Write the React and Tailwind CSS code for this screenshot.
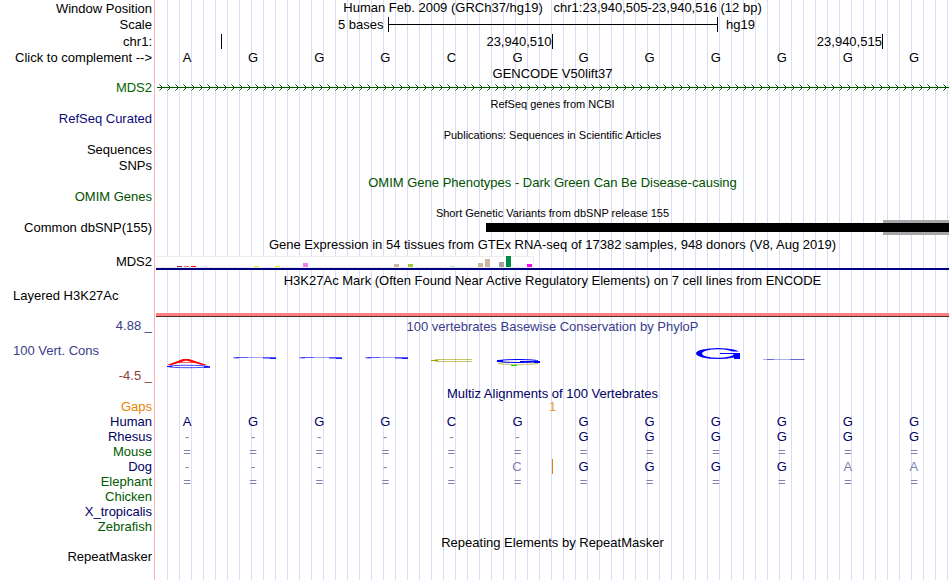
const HUMAN = "AGGGCGGGGGGG";

const GRID = "bg-[repeating-linear-gradient(to_right,transparent_0_11px,#dcdcf8_11px_12px)]";

const ALIGNMENTS = [
  { name: "Human", color: "text-[#000064]", bases: HUMAN },
  { name: "Rhesus", color: "text-[#000064]", bases: "------GGGGGG" },
  { name: "Mouse", color: "text-[#005a00]", bases: "============" },
  { name: "Dog", color: "text-[#000064]", bases: "-----CGGGGAA", insertAt: 5 },
  { name: "Elephant", color: "text-[#005a00]", bases: "============" },
  { name: "Chicken", color: "text-[#005a00]", bases: "" },
  { name: "X_tropicalis", color: "text-[#000064]", bases: "" },
  { name: "Zebrafish", color: "text-[#005a00]", bases: "" },
];

// tissue index -> bar height and colour
const TISSUES = {
  3: { h: 1, c: "#8b1c62" },
  4: { h: 1, c: "#ee6a50" },
  5: { h: 1, c: "#ff0000" },
  14: { h: 1, c: "#eeee00" },
  17: { h: 1, c: "#eeee00" },
  21: { h: 4, c: "#ee82ee" },
  34: { h: 3, c: "#cdb79e" },
  36: { h: 3, c: "#9acd32" },
  42: { h: 1, c: "#b4eeb4" },
  46: { h: 4, c: "#cdb79e" },
  47: { h: 8, c: "#cdb79e" },
  49: { h: 5, c: "#a6a6a6" },
  50: { h: 11, c: "#008b45" },
  53: { h: 3, c: "#ff00ff" },
};

function Row({ label, color = "text-black", height = "h-[15px]", children }) {
  return (
    <div className={`flex ${height}`}>
      <div
        className={`w-[155px] shrink-0 flex items-center justify-end border-r border-[#ffb4b4] pr-0.5 ${color}`}
      >
        {label}
      </div>
      <div className={`ml-px mr-px flex-1 min-w-0 ${GRID}`}>{children}</div>
    </div>
  );
}

function Title({ text, color = "text-black", height = "h-[16px]", small }) {
  return (
    <Row height={height}>
      <h2
        className={`h-full flex items-center justify-center pt-0.5 ${color} ${small ? "text-[11px]" : ""}`}
      >
        {text}
      </h2>
    </Row>
  );
}

function Bases({ seq, color, insertAt }) {
  return (
    <div className={`grid grid-cols-12 h-full ${color}`}>
      {seq.split("").map((b, i) => {
        const faded = b === "-" || b === "=" || (color !== "text-black" && b !== HUMAN[i]);
        return (
          <span
            key={i}
            className={`pr-1 text-center ${faded ? "text-[#8080b2]" : ""} ${
              i === insertAt ? "border-r border-[#e68200]" : ""
            }`}
          >
            {b}
          </span>
        );
      })}
    </div>
  );
}

function GeneLine() {
  return (
    <svg className="block w-full h-[15px]" aria-label="MDS2 intron">
      <defs>
        <pattern id="strand" x="1" width="8" height="15" patternUnits="userSpaceOnUse">
          <polyline points="2.5,4.5 5.5,7.5 2.5,10.5" fill="none" stroke="#005a00" strokeWidth="1" />
        </pattern>
      </defs>
      <rect x="1" width="100%" height="15" fill="url(#strand)" />
      <rect x="1" y="7" width="100%" height="1" fill="#005a00" />
    </svg>
  );
}

function GtexBars() {
  return (
    <div className="h-full flex flex-col justify-end">
      <div className="w-[378px] h-[12px] flex items-end gap-[2px] bg-white border-t border-r border-b border-[#ececec]">
        {Array.from({ length: 54 }, (_, i) => {
          const t = TISSUES[i];
          return (
            <div
              key={i}
              className="w-[5px] shrink-0"
              style={{ height: t ? t.h : 0, backgroundColor: t?.c }}
            />
          );
        })}
      </div>
      <div className="h-[2px] bg-[#000080]" />
    </div>
  );
}

/* conservation logo, one drawing per base */
function FlatG() {
  return (
    <g>
      <rect x="0" y="12" width="43" height="1" fill="#0000ff" opacity="0.35" />
      <rect x="3" y="12" width="12" height="1" fill="#0000ff" opacity="0.45" />
      <rect x="1" y="12" width="5" height="2" fill="#0000ff" opacity="0.3" />
      <rect x="30" y="12" width="13" height="2" fill="#0000ff" opacity="0.45" />
      <rect x="37" y="13" width="6" height="1" fill="#0000ff" opacity="0.8" />
    </g>
  );
}

const LOGOS = {
  0: (
    <g>
      <ellipse cx="21" cy="21.5" rx="20" ry="1.2" fill="none" stroke="#0000ff" strokeWidth="0.7" />
      <rect x="0" y="21" width="5" height="1" fill="#0000ff" />
      <rect x="37" y="21" width="6" height="2" fill="#0000ff" opacity="0.8" />
      <polygon points="0,20 16,14 22,14 40,20 35,20 19,15.5 5,20" fill="#ff0000" />
      <rect x="11" y="17" width="16" height="1" fill="#ff0000" opacity="0.6" />
    </g>
  ),
  1: <FlatG />,
  2: <FlatG />,
  3: <FlatG />,
  4: (
    <g>
      <rect x="4" y="14" width="37" height="1" fill="#a0a000" opacity="0.6" />
      <rect x="4" y="16" width="37" height="1" fill="#a0a000" opacity="0.6" />
      <rect x="0" y="15" width="7" height="1" fill="#a0a000" />
    </g>
  ),
  5: (
    <g>
      <ellipse cx="21" cy="18.5" rx="20" ry="1" fill="none" stroke="#a0a000" strokeWidth="0.8" opacity="0.7" />
      <rect x="14" y="20" width="6" height="1" fill="#00e600" />
      <ellipse cx="21" cy="16" rx="20" ry="1.5" fill="none" stroke="#0000ff" strokeWidth="1" />
      <rect x="0" y="15" width="6" height="2" fill="#0000ff" />
      <rect x="23" y="16" width="20" height="1" fill="#0000ff" />
      <rect x="37" y="16" width="6" height="2" fill="#0000ff" />
    </g>
  ),
  8: (
    <g>
      <mask id="ring">
        <rect width="44" height="25" fill="#ffffff" />
        <ellipse cx="22" cy="8.5" rx="16" ry="4.3" fill="#000000" />
        <rect x="34" y="6.5" width="10" height="1.5" fill="#000000" />
      </mask>
      <ellipse cx="22" cy="8.5" rx="22" ry="5.5" fill="#0000ff" mask="url(#ring)" />
      <rect x="24" y="8" width="20" height="1" fill="#0000ff" />
      <rect x="38" y="8" width="6" height="6" fill="#0000ff" />
    </g>
  ),
  9: (
    <g fill="#3c3cc8">
      <rect x="1" y="14" width="42" height="1" opacity="0.4" />
      <rect x="5" y="14" width="7" height="1" opacity="0.6" />
      <rect x="28" y="14" width="14" height="1" opacity="0.6" />
    </g>
  ),
};

export default function App() {
  return (
    <main className="min-h-screen flex flex-col bg-white overflow-hidden whitespace-pre text-[13px] leading-[15px] font-['Liberation_Sans',Arial,sans-serif]">
      <Row label="Window Position" height="h-[16px]">
        <h1 className="text-center">
          {"Human Feb. 2009 (GRCh37/hg19)   chr1:23,940,505-23,940,516 (12 bp)"}
        </h1>
      </Row>
      <Row label="Scale" height="h-[17px]">
        <div className="flex h-full items-center">
          <span className="w-[29.2%] pr-1 text-right">5 bases</span>
          <div className="w-5/12 h-[15px] flex items-center border-x border-black">
            <div className="w-full h-px bg-black" />
          </div>
          <span className="pl-2">hg19</span>
        </div>
      </Row>
      <Row label="chr1:" height="h-[17px]">
        <div className="grid grid-cols-12 pt-px text-right">
          <span className="h-[15px] border-r border-black" />
          <span className="col-start-6 h-[15px] pr-0.5 border-r border-black">23,940,510</span>
          <span className="col-start-11 h-[15px] pr-0.5 border-r border-black">23,940,515</span>
        </div>
      </Row>
      <Row label={<button type="button">{"Click to complement -->"}</button>}>
        <Bases seq={HUMAN} color="text-black" />
      </Row>

      <Title text="GENCODE V50lift37" height="h-[15px]" />
      <Row label="MDS2" color="text-[#006400]">
        <GeneLine />
      </Row>
      <Title text="RefSeq genes from NCBI" small />
      <Row label="RefSeq Curated" color="text-[#0c0c78]" />
      <Title text="Publications: Sequences in Scientific Articles" small />
      <Row label="Sequences" />
      <Row label="SNPs" height="h-[16px]" />
      <Title
        text="OMIM Gene Phenotypes - Dark Green Can Be Disease-causing"
        color="text-[#005000]"
      />
      <Row label="OMIM Genes" color="text-[#005000]" />

      <Title text="Short Genetic Variants from dbSNP release 155" small />
      <Row label="Common dbSNP(155)">
        <div className="flex h-full items-center pl-[41.6%]">
          <div className="flex-1 h-[9px] bg-black" />
          <div className="w-1/7 h-[15px] flex items-center bg-[#a6a6a6]">
            <div className="w-full h-[9px] bg-black" />
          </div>
        </div>
      </Row>

      <Title
        text="Gene Expression in 54 tissues from GTEx RNA-seq of 17382 samples, 948 donors (V8, Aug 2019)"
        height="h-[17px]"
      />
      <Row label="MDS2" height="h-[18px]">
        <GtexBars />
      </Row>

      <Title
        text="H3K27Ac Mark (Often Found Near Active Regulatory Elements) on 7 cell lines from ENCODE"
        height="h-[18px]"
      />
      <Row
        label={<span className="w-full h-full pl-[13px]">Layered H3K27Ac</span>}
        height="h-[29px]"
      >
        <div className="h-full flex items-end">
          <div className="w-full h-[4px] bg-[#ff8080] border-b border-[#4d2626]" />
        </div>
      </Row>

      <Row
        height="h-[68px]"
        label={
          <div className="w-full h-full flex flex-col gap-[10px] pt-px text-right">
            <span className="text-[#3c3c8c]">4.88 _</span>
            <span className="pl-[13px] text-left text-[#3c3c8c]">100 Vert. Cons</span>
            <span className="text-[#8c3c3c]">-4.5 _</span>
          </div>
        }
      >
        <h2 className="h-[28px] pt-0.5 text-center text-[#3c3c8c]">
          100 vertebrates Basewise Conservation by PhyloP
        </h2>
        <div className="grid grid-cols-12">
          {HUMAN.split("").map((b, i) => (
            <div key={i} className="flex justify-center">
              <svg className="w-[44px] h-[25px]" viewBox="0 0 44 25">
                {LOGOS[i]}
              </svg>
            </div>
          ))}
        </div>
      </Row>

      <Title text="Multiz Alignments of 100 Vertebrates" color="text-[#000064]" height="h-[14px]" />
      <Row label="Gaps" color="text-[#e68200]">
        <div className="text-center text-[#eb9b32]">1</div>
      </Row>
      {ALIGNMENTS.map((a) => (
        <Row key={a.name} label={a.name} color={a.color}>
          <Bases seq={a.bases} color="text-[#000064]" insertAt={a.insertAt} />
        </Row>
      ))}

      <Title text="Repeating Elements by RepeatMasker" height="h-[15px]" />
      <Row label="RepeatMasker" />
      <Row height="flex-1" />
    </main>
  );
}
